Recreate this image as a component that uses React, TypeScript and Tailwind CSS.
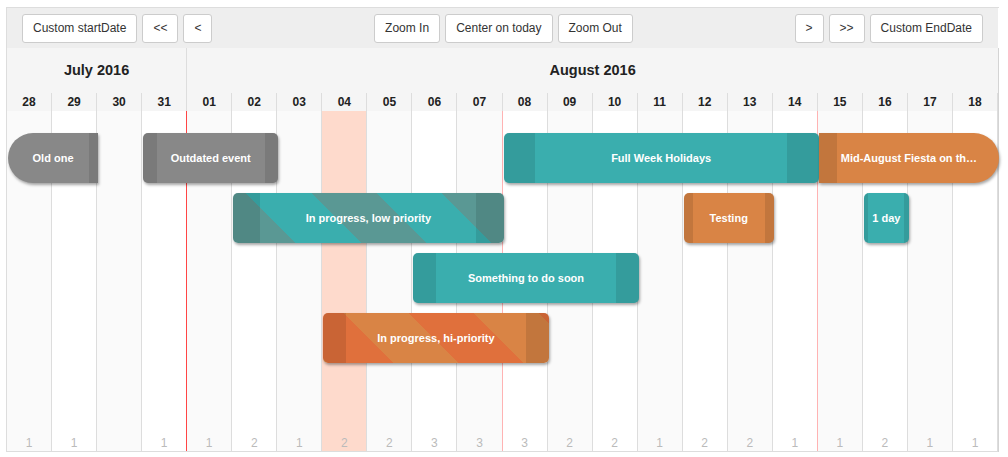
import React from 'react';

const days = [
  { d: '28', c: '1' },
  { d: '29', c: '1' },
  { d: '30', c: '' },
  { d: '31', c: '1' },
  { d: '01', c: '1' },
  { d: '02', c: '2' },
  { d: '03', c: '1' },
  { d: '04', c: '2' },
  { d: '05', c: '2' },
  { d: '06', c: '3' },
  { d: '07', c: '3' },
  { d: '08', c: '3' },
  { d: '09', c: '2' },
  { d: '10', c: '2' },
  { d: '11', c: '1' },
  { d: '12', c: '2' },
  { d: '13', c: '2' },
  { d: '14', c: '1' },
  { d: '15', c: '1' },
  { d: '16', c: '2' },
  { d: '17', c: '1' },
  { d: '18', c: '1' },
];

type Ev = {
  label: string;
  pos: string;
  look: string;
  capL: boolean;
  capR: boolean;
};

const events: Ev[] = [
  { label: 'Old one', pos: 'row-start-1 col-start-1 col-span-2', look: 'bg-[#888888] rounded-l-[25px]', capL: false, capR: true },
  { label: 'Outdated event', pos: 'row-start-1 col-start-4 col-span-3', look: 'bg-[#888888] rounded-[5px]', capL: true, capR: true },
  { label: 'Full Week Holidays', pos: 'row-start-1 col-start-12 col-span-7', look: 'bg-[#3aaeae] rounded-[5px]', capL: true, capR: true },
  { label: 'Mid-August Fiesta on th…', pos: 'row-start-1 col-start-19 col-span-4', look: 'bg-[#d98445] rounded-r-[25px]', capL: true, capR: false },
  {
    label: 'In progress, low priority',
    pos: 'row-start-2 col-start-6 col-span-6',
    look: 'rounded-[5px] [background-image:repeating-linear-gradient(45deg,#5a9894_0_44.5px,#3aaeae_44.5px_90.6px,#5a9894_90.6px_92px)]',
    capL: true,
    capR: true,
  },
  { label: 'Testing', pos: 'row-start-2 col-start-16 col-span-2', look: 'bg-[#d98445] rounded-[5px]', capL: true, capR: true },
  { label: '1 day', pos: 'row-start-2 col-start-20 col-span-1', look: 'bg-[#3aaeae] rounded-[5px]', capL: true, capR: true },
  { label: 'Something to do soon', pos: 'row-start-3 col-start-10 col-span-5', look: 'bg-[#3aaeae] rounded-[5px]', capL: true, capR: true },
  {
    label: 'In progress, hi-priority',
    pos: 'row-start-4 col-start-8 col-span-5',
    look: 'rounded-[5px] [background-image:repeating-linear-gradient(45deg,#d98445_0_3.5px,#e0703c_3.5px_49.5px,#d98445_49.5px_92px)]',
    capL: true,
    capR: true,
  },
];

const Btn = ({ children }: { children: React.ReactNode }) => (
  <button className="h-[29px] rounded-[3px] border border-[#ccc] bg-white px-[10px] text-[12px] text-[#333]">
    {children}
  </button>
);

const colBg = (i: number) => (i === 7 ? 'bg-[#fedacc]' : i % 2 === 0 ? 'bg-[#fafafa]' : 'bg-white');
const colLine = (i: number) =>
  i === 3 ? 'border-[#ff4545]' : i === 10 || i === 17 ? 'border-[#ffb3b3]' : 'border-[#ddd]';

export default function App() {
  return (
    <div className="min-h-[457px] bg-white font-['Liberation_Sans',Arial,sans-serif]">
      <div className="ml-[6px] pt-[7px]">
        <div className="w-[993px] border-l border-t border-[#ddd]">
          <div className="flex h-[40px] w-[991px] items-center justify-between bg-[#eeeeee] px-[15px]">
            <div className="flex gap-[5px]">
              <Btn>Custom startDate</Btn>
              <Btn>&lt;&lt;</Btn>
              <Btn>&lt;</Btn>
            </div>
            <div className="flex gap-[5px]">
              <Btn>Zoom In</Btn>
              <Btn>Center on today</Btn>
              <Btn>Zoom Out</Btn>
            </div>
            <div className="flex gap-[5px]">
              <Btn>&gt;</Btn>
              <Btn>&gt;&gt;</Btn>
              <Btn>Custom EndDate</Btn>
            </div>
          </div>

          <div className="w-[992px] border-r border-[#d4d4d4]">
            <div className="grid h-[45px] w-[991px] grid-cols-[repeat(22,minmax(0,1fr))] bg-[#f5f5f5] text-[14.5px] font-bold text-[#222]">
              <div className="col-span-4 flex items-center justify-center border-r border-[#ddd]">July 2016</div>
              <div className="col-span-18 flex items-center justify-center">August 2016</div>
            </div>

            <div className="grid h-[18px] w-[991px] grid-cols-[repeat(22,minmax(0,1fr))] bg-[#f5f5f5] text-[12px] font-bold text-[#222]">
              {days.map((d) => (
                <div key={d.d} className="flex items-center justify-center border-r border-[#ddd] leading-[18px]">
                  {d.d}
                </div>
              ))}
            </div>

            <div className="relative h-[341px] w-[991px] border-b border-[#ddd]">
              <div className="grid h-full grid-cols-[repeat(22,minmax(0,1fr))]">
                {days.map((d, i) => (
                  <div
                    key={d.d}
                    className={`flex flex-col items-center justify-end border-r pb-[1px] text-[12px] leading-[14px] text-[#bbb] ${colBg(i)} ${colLine(i)}`}
                  >
                    {d.c}
                  </div>
                ))}
              </div>

              <div className="absolute bottom-0 left-[1px] right-[-1px] top-0 grid grid-cols-[repeat(22,minmax(0,1fr))] grid-rows-[repeat(4,60px)] content-start items-start pt-[22px]">
                {events.map((e) => (
                  <div
                    key={e.label}
                    className={`relative flex h-[50px] items-center overflow-hidden text-white shadow-[1px_2px_3px_rgba(0,0,0,0.35)] ${e.pos} ${e.look}`}
                  >
                    {e.capL && <div className="absolute left-0 top-0 h-full w-[10%] bg-black/10" />}
                    {e.capR && <div className="absolute right-0 top-0 h-full w-[10%] bg-black/10" />}
                    <div className="relative w-full whitespace-nowrap px-[8%] text-center text-[11px] font-bold">{e.label}</div>
                  </div>
                ))}
              </div>
            </div>
          </div>
        </div>
      </div>
    </div>
  );
}
